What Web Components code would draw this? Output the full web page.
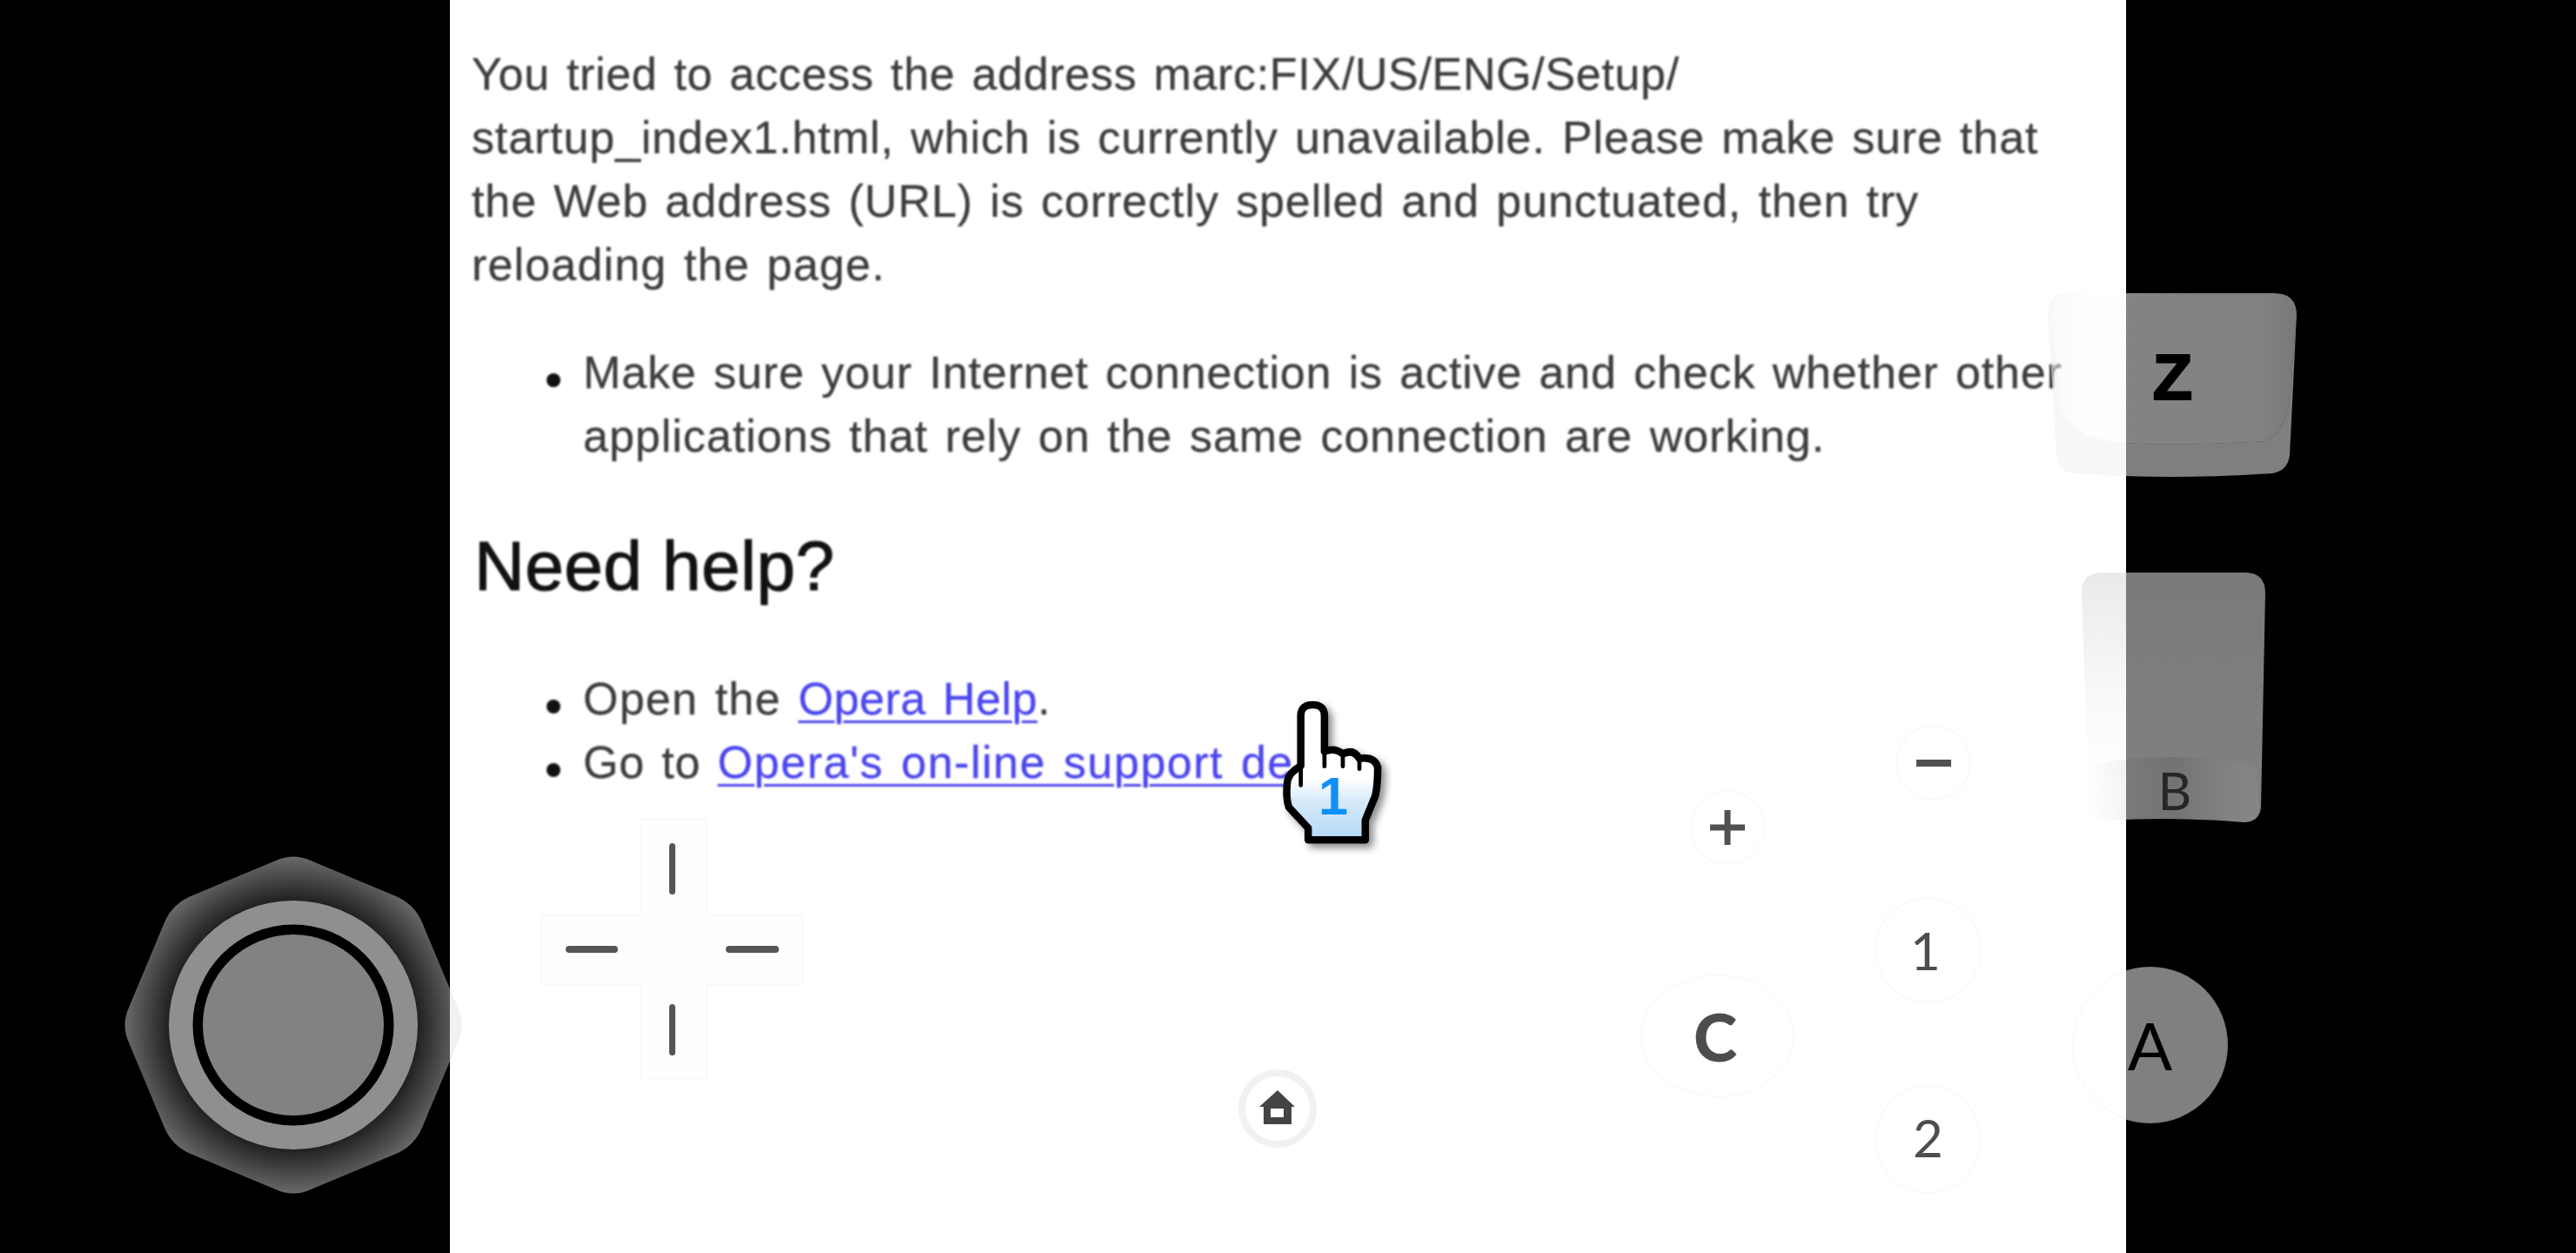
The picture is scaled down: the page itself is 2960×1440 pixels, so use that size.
<!DOCTYPE html>
<html>
<head>
<meta charset="utf-8">
<title>Opera error page</title>
<style>
    html, body { margin: 0; padding: 0; background: #000; }
</style>
</head>
<body>
<emu-screen>
    <error-page>
        <text-line style="--ls:.67px">You tried to access the address marc:FIX/US/ENG/Setup/</text-line>
        <text-line style="--ls:.85px">startup_index1.html, which is currently unavailable. Please make sure that</text-line>
        <text-line style="--ls:.9px">the Web address (URL) is correctly spelled and punctuated, then try</text-line>
        <text-line style="--ls:1.16px">reloading the page.</text-line>
        <bullet-item style="margin-top:51px">
            <text-line style="--ls:.86px">Make sure your Internet connection is active and check whether other</text-line>
            <text-line style="--ls:.98px">applications that rely on the same connection are working.</text-line>
        </bullet-item>
        <help-heading>Need help?</help-heading>
        <bullet-item><text-line style="--ls:1.2px">Open the <help-link style="--ls:.5px">Opera Help</help-link>.</text-line></bullet-item>
        <bullet-item><text-line style="--ls:.83px">Go to <help-link style="--ls:1.5px">Opera's on-line support de</help-link></text-line></bullet-item>
    </error-page>
    <touch-overlay slot="overlay">
        <analog-stick></analog-stick>
        <shoulder-z></shoulder-z>
        <shoulder-b></shoulder-b>
        <d-pad></d-pad>
        <round-button style="--x:1942px;--y:908px;--w:86px;--h:86px;--size:62px"><svg width="40" height="40" viewBox="0 0 40 40"><path d="M0 16.500H40V23.500H0ZM16.500 0H23.500V40H16.500Z" fill="#505050"/></svg></round-button>
        <round-button style="--x:2178px;--y:833px;--w:87px;--h:87px;--size:62px"><svg width="40" height="8" viewBox="0 0 40 8"><rect width="40" height="8" fill="#505050"/></svg></round-button>
        <round-button style="--x:2154px;--y:1031px;--w:123px;--h:122px;--size:60px;--pr:6px">1</round-button>
        <round-button style="--x:2154px;--y:1247px;--w:123px;--h:125px;--size:60px;--pb:6px">2</round-button>
        <round-button style="--x:1885px;--y:1120px;--w:177px;--h:141px;--size:76px;--weight:900;--pr:5px">C</round-button>
        <round-button style="--x:2381px;--y:1111px;--w:179px;--h:180px;--size:76px;--color:#000;--fill:rgba(255,255,255,.5)">A</round-button>
        <home-button></home-button>
        <hand-cursor></hand-cursor>
    </touch-overlay>
</emu-screen>

<script>
class EmuScreen extends HTMLElement {
    constructor(){
        super();
        this.attachShadow({mode:'open'});
        this.shadowRoot.innerHTML=`
            <style>
                :host{
                    display: flex;
                    justify-content: center;
                    position: relative;
                    width: 2960px;
                    height: 1440px;
                    overflow: hidden;
                    background: #000;
                }
            </style>
            <slot></slot>
            <slot name="overlay"></slot>`;
    }
}

class ErrorPage extends HTMLElement {
    constructor(){
        super();
        this.attachShadow({mode:'open'});
        this.shadowRoot.innerHTML=`
            <style>
                :host{
                    display: block;
                    width: 1926px;
                    height: 1440px;
                    background: #fff;
                }
                div{
                    display: flex;
                    flex-direction: column;
                    padding: 49px 0 0 25px;
                    color: #3c3c3c;
                    font: 52px/73px "Liberation Sans", Arial, sans-serif;
                    -webkit-text-stroke: .3px;
                    white-space: nowrap;
                    filter: blur(.8px);
                }
            </style>
            <div><slot></slot></div>`;
    }
}

class TextLine extends HTMLElement {
    constructor(){
        super();
        this.attachShadow({mode:'open'});
        this.shadowRoot.innerHTML=`
            <style>
                :host{
                    display: block;
                    letter-spacing: var(--ls, 0);
                    word-spacing: 4px;
                }
            </style>
            <slot></slot>`;
    }
}

class BulletItem extends HTMLElement {
    constructor(){
        super();
        this.attachShadow({mode:'open'});
        this.shadowRoot.innerHTML=`
            <style>
                :host{
                    display: block;
                    padding-left: 128px;
                    position: relative;
                }
                i{
                    position: absolute;
                    left: 86px;
                    top: 37px;
                    width: 16px;
                    height: 16px;
                    border-radius: 50%;
                    background: #111;
                }
            </style>
            <i></i><slot></slot>`;
    }
}

class HelpHeading extends HTMLElement {
    constructor(){
        super();
        this.attachShadow({mode:'open'});
        this.shadowRoot.innerHTML=`
            <style>
                :host{
                    display: block;
                    font-size: 80px;
                    line-height: 92px;
                    letter-spacing: .5px;
                    color: #111;
                    -webkit-text-stroke: 1.2px #111;
                    margin: 67px 0 70px 3px;
                }
            </style>
            <slot></slot>`;
    }
}

class HelpLink extends HTMLElement {
    constructor(){
        super();
        this.attachShadow({mode:'open'});
        this.shadowRoot.innerHTML=`
            <style>
                :host{
                    color: #4a44ee;
                    letter-spacing: var(--ls, 0);
                    text-decoration: underline;
                    text-decoration-thickness: 3px;
                    text-underline-offset: 7px;
                }
            </style>
            <slot></slot>`;
    }
}

class TouchOverlay extends HTMLElement {
    constructor(){
        super();
        this.attachShadow({mode:'open'});
        this.shadowRoot.innerHTML=`
            <style>
                :host{
                    position: absolute;
                    left: 0;
                    top: 0;
                    width: 2960px;
                    height: 1440px;
                    font-family: Lato, "Liberation Sans", sans-serif;
                }
            </style>
            <slot></slot>`;
    }
}

class AnalogStick extends HTMLElement {
    constructor(){
        super();
        this.attachShadow({mode:'open'});
        this.shadowRoot.innerHTML=`
            <style>
                :host{ position:absolute; left:137px; top:978px; width:400px; height:400px; }
                svg{ display:block; }
            </style>
            <svg width="400" height="400" viewBox="-200 -200 400 400">
                <defs>
                    <radialGradient id="oct" gradientUnits="userSpaceOnUse" cx="0" cy="0" r="198">
                        <stop offset="0" stop-color="#e0e0e0" stop-opacity="0"/>
                        <stop offset=".7" stop-color="#e0e0e0" stop-opacity=".12"/>
                        <stop offset="1" stop-color="#e0e0e0" stop-opacity=".5"/>
                    </radialGradient>
                </defs>
                <path d="M-20 -189Q0 -198 20 -189L118 -148Q139 -139 148 -118L189 -20Q198 0 189 20L148 118Q139 139 118 148L20 189Q0 198 -20 189L-118 148Q-139 139 -148 118L-189 20Q-198 0 -189 -20L-148 -118Q-139 -139 -118 -148Z" fill="url(#oct)"/>
                <circle r="143" fill="#8f8f8f"/>
                <circle r="115.500" fill="#000"/>
                <circle r="104" fill="#828282"/>
            </svg>`;
    }
}

class ShoulderZ extends HTMLElement {
    constructor(){
        super();
        this.attachShadow({mode:'open'});
        this.shadowRoot.innerHTML=`
            <style>
                :host{ position:absolute; left:2353px; top:337px; width:286px; height:212px; }
                svg{ position:absolute; left:0; top:0; }
                span{
                    position: absolute;
                    left: 120px;
                    top: 59px;
                    width: 47px;
                    font: bold 75px/75px "Liberation Sans", sans-serif;
                    -webkit-text-stroke: 2px #000;
                    color: #000;
                    text-align: center;
                }
            </style>
            <svg width="286" height="212" viewBox="0 0 286 212">
                <defs>
                    <linearGradient id="zface" x1="0" x2="1" y1="0" y2="0">
                        <stop offset="0" stop-color="#f4f4f4" stop-opacity=".52"/>
                        <stop offset=".15" stop-color="#fdfdfd" stop-opacity=".52"/>
                        <stop offset=".85" stop-color="#fafafa" stop-opacity=".52"/>
                        <stop offset="1" stop-color="#dedede" stop-opacity=".54"/>
                    </linearGradient>
                </defs>
                <path fill-rule="evenodd" d="M24 0H260Q286 0 286 25L278 186Q276 204 258 207Q143 215 28 207Q12 204 10 186L0 25Q0 0 24 0ZM24 0Q4 3 4 25L15 130Q25 168 90 172Q143 176 250 170Q278 160 280 100L286 25Q286 0 260 0Z" fill="#f0f0f0" fill-opacity=".53"/>
                <path d="M24 0H260Q286 0 286 25L280 100Q278 160 250 170Q143 176 90 172Q25 168 15 130L4 25Q4 3 24 0Z" fill="url(#zface)"/>
            </svg>
            <span>Z</span>`;
    }
}

class ShoulderB extends HTMLElement {
    constructor(){
        super();
        this.attachShadow({mode:'open'});
        this.shadowRoot.innerHTML=`
            <style>
                :host{ position:absolute; left:2392px; top:658px; width:211px; height:288px; }
                svg{ position:absolute; left:0; top:0; }
                span{
                    position: absolute;
                    left: 84px;
                    top: 214px;
                    width: 46px;
                    font: 60px/72px Lato, "Liberation Sans", sans-serif;
                    color: #262626;
                    text-align: center;
                }
            </style>
            <svg width="211" height="288" viewBox="0 0 211 288">
                <defs>
                    <linearGradient id="bbody" x1="0" x2="0" y1="0" y2="1">
                        <stop offset="0" stop-color="#d9d9d9" stop-opacity=".56"/>
                        <stop offset=".6" stop-color="#f8f8f8" stop-opacity=".51"/>
                        <stop offset="1" stop-color="#fff" stop-opacity=".5"/>
                    </linearGradient>
                    <linearGradient id="blip" x1="0" x2="1" y1="0" y2="0">
                        <stop offset="0" stop-color="#000" stop-opacity="0"/>
                        <stop offset=".5" stop-color="#000" stop-opacity=".1"/>
                        <stop offset="1" stop-color="#fff" stop-opacity=".05"/>
                    </linearGradient>
                </defs>
                <path d="M22 0H188Q211 0 211 24L206 270Q204 287 186 287Q105 280 28 285Q10 285 8 268L0 24Q0 0 22 0Z" fill="url(#bbody)"/>
                <path d="M10 222Q30 214 105 212Q185 214 200 224L204 268Q204 287 186 287Q105 280 28 285Q10 285 10 268Z" fill="url(#blip)"/>
            </svg>
            <span>B</span>`;
    }
}

class DPad extends HTMLElement {
    constructor(){
        super();
        this.attachShadow({mode:'open'});
        this.shadowRoot.innerHTML=`
            <style>
                :host{ position:absolute; left:621px; top:940px; width:302px; height:302px; }
                svg{ display:block; }
            </style>
            <svg width="302" height="302" viewBox="-1 0 302 302">
                <path d="M114 3Q114 1 116 1H188Q190 1 190 3V112H298Q300 112 300 114V190Q300 192 298 192H190V299Q190 301 188 301H116Q114 301 114 299V192H2Q0 192 0 190V114Q0 112 2 112H114Z" fill="#fefefe" stroke="#f9f9f9" stroke-width="2"/>
                <rect x="147" y="29" width="7" height="59" rx="3.500" fill="#555"/>
                <rect x="147" y="214" width="7" height="59" rx="3.500" fill="#555"/>
                <rect x="28" y="147" width="60" height="8" rx="4" fill="#555"/>
                <rect x="212" y="147" width="61" height="8" rx="4" fill="#555"/>
            </svg>`;
    }
}

class RoundButton extends HTMLElement {
    constructor(){
        super();
        this.attachShadow({mode:'open'});
        this.shadowRoot.innerHTML=`
            <style>
                :host{
                    position: absolute;
                    left: var(--x);
                    top: var(--y);
                    width: var(--w);
                    height: var(--h);
                    box-sizing: border-box;
                    display: flex;
                    align-items: center;
                    justify-content: center;
                    padding-right: var(--pr, 0);
                    padding-bottom: var(--pb, 0);
                    border-radius: 50%;
                    border: 2px solid rgba(0,0,0,.02);
                    background: var(--fill, rgba(255,255,255,.4));
                    color: var(--color, #4d4d4d);
                    font: var(--weight, 400) var(--size)/1 Lato, "Liberation Sans", sans-serif;
                }
            </style>
            <slot></slot>`;
    }
}

class HomeButton extends HTMLElement {
    constructor(){
        super();
        this.attachShadow({mode:'open'});
        this.shadowRoot.innerHTML=`
            <style>
                :host{ position:absolute; left:1423px; top:1229px; width:90px; height:90px; }
                svg{ display:block; }
            </style>
            <svg width="90" height="90" viewBox="0 0 90 90">
                <circle cx="45" cy="45" r="41" fill="#fff" stroke="#f1f1f1" stroke-width="8"/>
                <path fill-rule="evenodd" d="M45 24L65 43H61V63H29V43H24ZM37 45V55H52V45Z" fill="#444"/>
            </svg>`;
    }
}

class HandCursor extends HTMLElement {
    constructor(){
        super();
        this.attachShadow({mode:'open'});
        this.shadowRoot.innerHTML=`
            <style>
                :host{ position:absolute; left:1430px; top:780px; width:194px; height:204px; }
                svg{ display:block; filter: drop-shadow(5px 5px 4px rgba(0,0,0,.45)) blur(.7px); }
                text{ font: bold 180px "Liberation Sans", sans-serif; }
            </style>
            <svg width="194" height="204" viewBox="0 0 570 600">
                <defs>
                    <linearGradient id="palm" x1="0" x2="0" y1="0" y2="1">
                        <stop offset=".55" stop-color="#fff"/>
                        <stop offset=".72" stop-color="#d5e8f9"/>
                        <stop offset="1" stop-color="#b4d9f7"/>
                    </linearGradient>
                </defs>
                <path d="M190 295V125Q190 88 230 88Q270 88 270 125V246Q305 232 332 254Q368 236 388 270Q440 262 450 300Q450 360 442 395L408 478V545H215V505L150 435Q138 400 145 345Q150 318 190 295Z" fill="url(#palm)" stroke="#000" stroke-width="25" stroke-linejoin="round"/>
                <path d="M190 295V360M270 246V296M332 254V296M388 270V305" fill="none" stroke="#000" stroke-width="14" stroke-linecap="round"/>
                <text x="300" y="458" fill="#0f90f8" text-anchor="middle">1</text>
            </svg>`;
    }
}

customElements.define('emu-screen', EmuScreen);
customElements.define('error-page', ErrorPage);
customElements.define('text-line', TextLine);
customElements.define('bullet-item', BulletItem);
customElements.define('help-heading', HelpHeading);
customElements.define('help-link', HelpLink);
customElements.define('touch-overlay', TouchOverlay);
customElements.define('analog-stick', AnalogStick);
customElements.define('shoulder-z', ShoulderZ);
customElements.define('shoulder-b', ShoulderB);
customElements.define('d-pad', DPad);
customElements.define('round-button', RoundButton);
customElements.define('home-button', HomeButton);
customElements.define('hand-cursor', HandCursor);
</script>
</body>
</html>
